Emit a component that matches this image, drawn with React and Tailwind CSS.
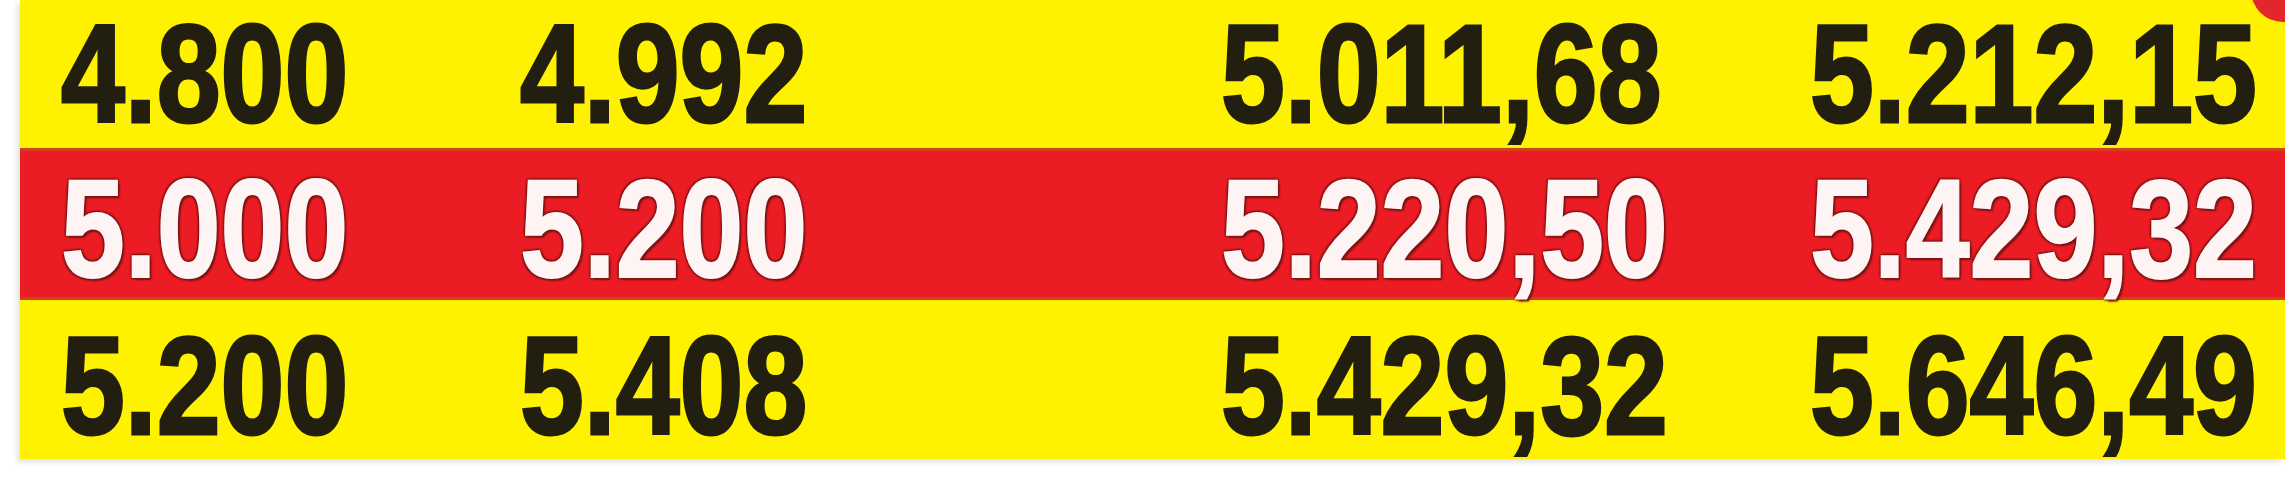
import React from 'react';

const rows = [
  { tone: 'yellow', values: ['4.800', '4.992', '5.011,68', '5.212,15'] },
  { tone: 'red', values: ['5.000', '5.200', '5.220,50', '5.429,32'] },
  { tone: 'yellow', values: ['5.200', '5.408', '5.429,32', '5.646,49'] },
];

const PriceRow = ({ tone, values, height, top }) => {
  const isRed = tone === 'red';
  return (
    <div
      className={
        isRed
          ? 'grid grid-cols-[459px_701px_589px_1fr] pl-[41px] bg-[#ec1c24] border-y-[3px] border-[#d2401a]'
          : 'grid grid-cols-[459px_701px_589px_1fr] pl-[41px]'
      }
      style={{ height, paddingTop: top }}
    >
      {values.map((v, i) => (
        <div key={i} className="whitespace-nowrap">
          <span
            className={
              isRed
                ? 'inline-block origin-left scale-x-[0.82] text-[140px] leading-none font-bold text-[#fff4f4] [-webkit-text-stroke:2px_#fff4f4] [text-shadow:0_0_3px_#7c1414,3px_3px_2px_#7c1414,-2px_-2px_2px_#7c1414,2px_-2px_2px_#7c1414,-2px_2px_2px_#7c1414]'
                : 'inline-block origin-left scale-x-[0.82] text-[140px] leading-none font-bold text-[#221e10] [-webkit-text-stroke:3px_#221e10]'
            }
            style={{ fontFamily: '"Liberation Sans", Arial, sans-serif' }}
          >
            {v}
          </span>
        </div>
      ))}
    </div>
  );
};

export default function App() {
  return (
    <div className="w-[2285px] h-[480px] bg-white pl-[20px] pb-[21px] overflow-hidden">
      <div className="relative h-full bg-[#fff200] shadow-[-3px_3px_6px_rgba(0,0,0,0.12)] overflow-hidden">
        <PriceRow {...rows[0]} height={148} top={4} />
        <PriceRow {...rows[1]} height={152} top={8} />
        <PriceRow {...rows[2]} height={160} top={16} />
        <div className="absolute -right-[30px] -top-[42px] w-[64px] h-[64px] rounded-full bg-[#e3262b]" />
      </div>
    </div>
  );
}
